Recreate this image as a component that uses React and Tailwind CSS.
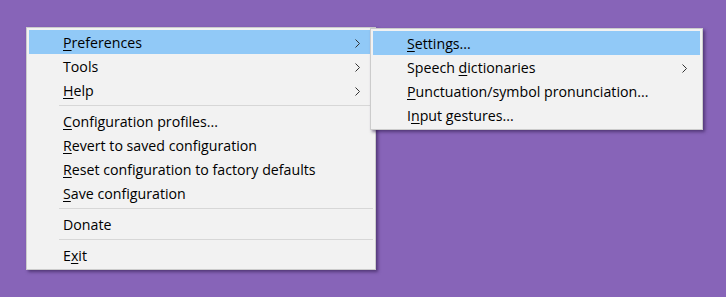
import React from 'react';

const mainItems = [
  { label: 'Preferences', key: 0, sub: true, active: true },
  { label: 'Tools', sub: true },
  { label: 'Help', key: 0, sub: true },
  { sep: true },
  { label: 'Configuration profiles...', key: 0 },
  { label: 'Revert to saved configuration', key: 0 },
  { label: 'Reset configuration to factory defaults', key: 0 },
  { label: 'Save configuration', key: 0 },
  { sep: true },
  { label: 'Donate' },
  { sep: true },
  { label: 'Exit', key: 1 },
];

const subItems = [
  { label: 'Settings...', key: 0, active: true },
  { label: 'Speech dictionaries', key: 7, sub: true },
  { label: 'Punctuation/symbol pronunciation...', key: 0 },
  { label: 'Input gestures...', key: 1 },
];

const Label = ({ text, k }) => {
  if (k === undefined) return <span>{text}</span>;
  return (
    <span>
      {text.slice(0, k)}
      <span className="underline underline-offset-2 decoration-1">{text[k]}</span>
      {text.slice(k + 1)}
    </span>
  );
};

const Chevron = () => (
  <svg width="5" height="9" viewBox="0 0 5 9" className="text-[#333]">
    <path d="M0.5 0.5 L4.5 4.5 L0.5 8.5" fill="none" stroke="currentColor" strokeWidth="1" />
  </svg>
);

const Menu = ({ items, className }) => (
  <div className={`absolute bg-[#f2f2f2] border border-[#cccccc] p-[2px] shadow-[2px_2px_3px_rgba(40,20,70,0.55)] ${className}`}>
    {items.map((it, i) =>
      it.sep ? (
        <div key={i} className="h-[7px] flex items-center pl-[30px]">
          <div className="h-px w-full bg-[#d7d7d7]" />
        </div>
      ) : (
        <div
          key={i}
          className={`h-[24px] flex items-center justify-between pt-[2px] pl-[34px] pr-[13px] ${it.active ? 'bg-[#91c9f7]' : ''}`}
        >
          <Label text={it.label} k={it.key} />
          {it.sub && <Chevron />}
        </div>
      )
    )}
  </div>
);

export default function App() {
  return (
    <div className="relative w-[726px] h-[297px] bg-[#8764b8] overflow-hidden text-[14.2px] text-black font-['Segoe_UI','Open_Sans',sans-serif] leading-none">
      <Menu items={mainItems} className="left-[26px] top-[27px] w-[350px]" />
      <Menu items={subItems} className="left-[370px] top-[28px] w-[333px]" />
    </div>
  );
}
